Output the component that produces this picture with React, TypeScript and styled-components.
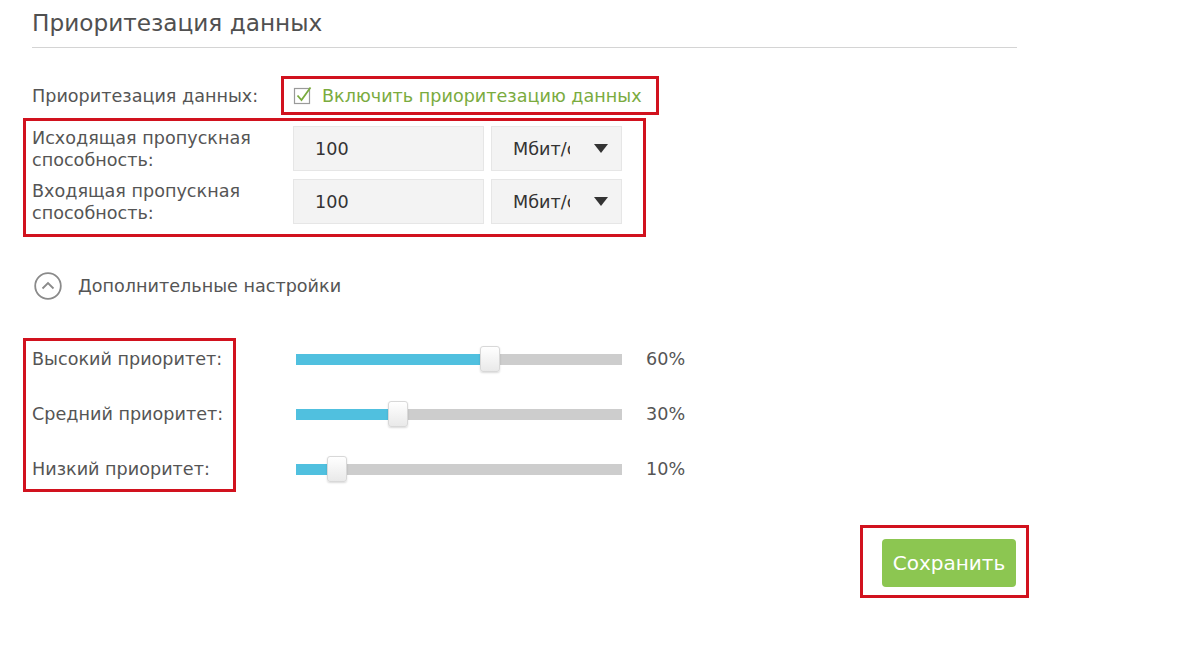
import type { FC } from 'react';
import styled, { createGlobalStyle } from 'styled-components';

const GlobalStyle = createGlobalStyle`
	body {
		margin: 0;
		background: #fff;
		font-family: 'DejaVu Sans', Verdana, sans-serif;
		color: #555;
	}
`;

const priorities = [
	{ label: 'Высокий приоритет:', value: 60 },
	{ label: 'Средний приоритет:', value: 30 },
	{ label: 'Низкий приоритет:', value: 10 },
];

const bandwidth = [
	['Исходящая пропускная', 'способность:'],
	['Входящая пропускная', 'способность:'],
];

export const App: FC = () => {
	return (
		<>
			<GlobalStyle />
			<Page>
				<Title>Приоритезация данных</Title>

				<EnableRow>
					<Label>Приоритезация данных:</Label>
					<Marked>
						<CheckLabel>
							<svg width="20" height="20" viewBox="0 0 20 20">
								<rect x="1.5" y="3.5" width="15" height="15" fill="#fff" stroke="#9a9a9a" strokeWidth="1.2" />
								<path d="M4.5 10.5 L8.5 15 L17.5 2.5" fill="none" stroke="#7aab3e" strokeWidth="1.8" />
							</svg>
							Включить приоритезацию данных
						</CheckLabel>
					</Marked>
				</EnableRow>

				<BandwidthBox>
					{bandwidth.map((lines, i) => (
						<FieldRow key={i}>
							<FieldLabel>
								{lines[0]}
								<br />
								{lines[1]}
							</FieldLabel>
							<Input>100</Input>
							<Select>
								<SelectText>Мбит/с</SelectText>
								<Arrow />
							</Select>
						</FieldRow>
					))}
				</BandwidthBox>

				<Advanced>
					<svg width="28" height="28" viewBox="0 0 28 28">
						<circle cx="14" cy="14" r="12.8" fill="none" stroke="#8a8a8a" strokeWidth="1.8" />
						<path d="M8.5 16.5 L14 11 L19.5 16.5" fill="none" stroke="#8a8a8a" strokeWidth="1.8" />
					</svg>
					<span>Дополнительные настройки</span>
				</Advanced>

				<PriorityBlock>
					<PriorityLabels>
						{priorities.map((p) => (
							<PriorityLabel key={p.label}>{p.label}</PriorityLabel>
						))}
					</PriorityLabels>
					<Sliders>
						{priorities.map((p) => (
							<SliderRow key={p.label}>
								<Track>
									<Fill style={{ width: `${10 + p.value * 3.06}px` }} />
									<Thumb style={{ left: `${p.value * 3.06}px` }} />
								</Track>
								<Percent>{p.value}%</Percent>
							</SliderRow>
						))}
					</Sliders>
				</PriorityBlock>

				<Footer>
					<SaveBox>
						<SaveButton>Сохранить</SaveButton>
					</SaveBox>
				</Footer>
			</Page>
		</>
	);
};

export default App;

const Page = styled.div`
	width: 985px;
	padding-left: 32px;
	font-size: 17.6px;
`;

const Title = styled.div`
	height: 48px;
	box-sizing: border-box;
	padding-top: 8px;
	font-size: 23.2px;
	line-height: 30px;
	color: #505050;
	border-bottom: 1px solid #d4d4d4;
`;

const EnableRow = styled.div`
	display: flex;
	align-items: center;
	margin-top: 28px;
	height: 39px;
`;

const Label = styled.div`
	width: 249px;
	line-height: 22px;
`;

const Marked = styled.div`
	border: 3px solid #d1121e;
`;

const CheckLabel = styled.label`
	display: flex;
	align-items: center;
	gap: 9px;
	height: 33px;
	padding: 0 14px 0 9px;
	color: #7aab3e;
	svg {
		margin-top: -2px;
	}
`;

const BandwidthBox = styled(Marked)`
	display: flex;
	flex-direction: column;
	gap: 8px;
	width: fit-content;
	margin: 3px 0 0 -9px;
	padding: 5px 21px 10px 6px;
`;

const FieldRow = styled.div`
	display: flex;
	align-items: center;
	height: 45px;
`;

const FieldLabel = styled.div`
	width: 261px;
	line-height: 22px;
`;

const Box = styled.div`
	display: flex;
	align-items: center;
	height: 45px;
	box-sizing: border-box;
	background: #f3f3f3;
	border: 1px solid #e6e6e6;
	color: #333;
`;

const Input = styled(Box)`
	width: 191px;
	padding-left: 21px;
`;

const Select = styled(Box)`
	width: 131px;
	margin-left: 7px;
	padding-left: 21px;
`;

const SelectText = styled.span`
	width: 57px;
	overflow: hidden;
	white-space: nowrap;
`;

const Arrow = styled.span`
	margin-left: 24px;
	width: 0;
	height: 0;
	border-left: 7px solid transparent;
	border-right: 7px solid transparent;
	border-top: 9px solid #333;
`;

const Advanced = styled.div`
	display: flex;
	align-items: center;
	gap: 16px;
	margin: 35px 0 0 2px;
	height: 28px;
`;

const PriorityBlock = styled.div`
	display: flex;
	margin: 38px 0 0 -9px;
`;

const PriorityLabels = styled(Marked)`
	display: flex;
	flex-direction: column;
	gap: 27px;
	width: 213px;
	box-sizing: border-box;
	padding: 4px 6px 6px 6px;
`;

const PriorityLabel = styled.div`
	height: 28px;
	line-height: 28px;
	white-space: nowrap;
`;

const Sliders = styled.div`
	display: flex;
	flex-direction: column;
	gap: 27px;
	margin-left: 60px;
	padding-top: 7px;
`;

const SliderRow = styled.div`
	display: flex;
	align-items: center;
	height: 28px;
`;

const Track = styled.div`
	position: relative;
	width: 326px;
	height: 11px;
	background: #cdcdcd;
`;

const Fill = styled.div`
	height: 100%;
	background: #50c0df;
`;

const Thumb = styled.div`
	position: absolute;
	top: -8px;
	width: 20px;
	height: 26px;
	box-sizing: border-box;
	border: 1px solid #d8d8d8;
	border-radius: 3px;
	background: linear-gradient(#ffffff, #e9e9e9);
	box-shadow: 0 1px 2px rgba(0, 0, 0, 0.15);
`;

const Percent = styled.span`
	margin-left: 24px;
`;

const Footer = styled.div`
	display: flex;
	justify-content: flex-end;
	margin: 33px -12px 0 0;
`;

const SaveBox = styled(Marked)`
	padding: 11px 10px 8px 19px;
`;

const SaveButton = styled.button`
	width: 134px;
	height: 48px;
	border: none;
	border-radius: 4px;
	background: #8cc651;
	color: #fff;
	font-family: 'DejaVu Sans', Verdana, sans-serif;
	font-size: 20px;
	cursor: pointer;
`;
